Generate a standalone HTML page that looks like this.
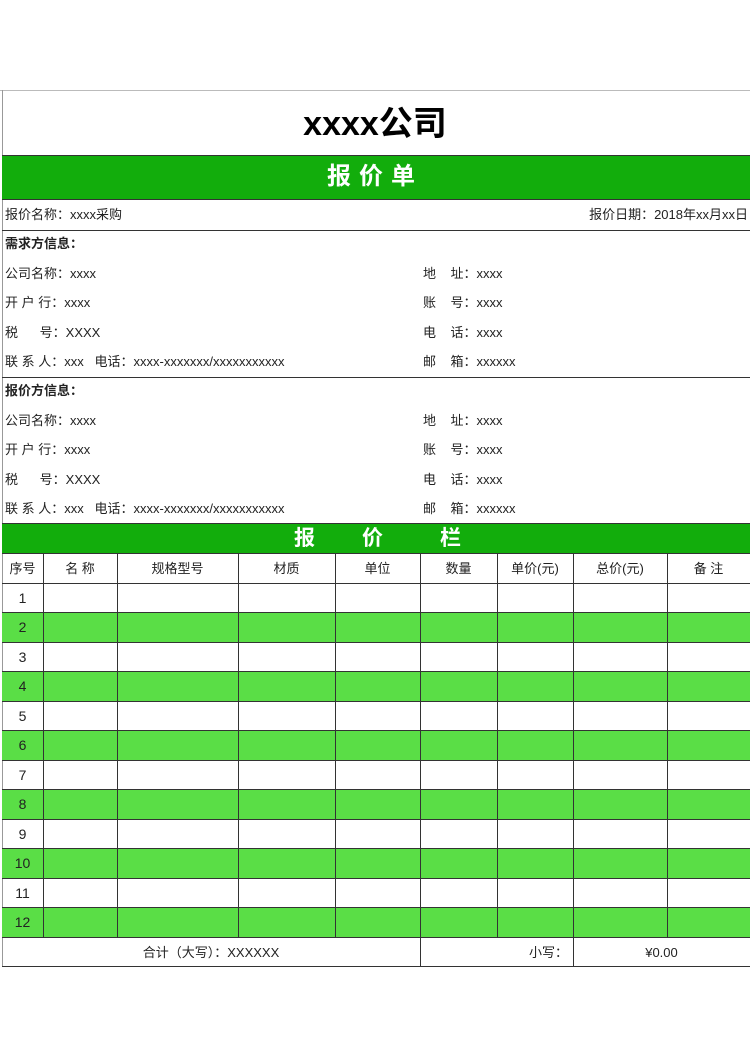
<!DOCTYPE html>
<html><head><meta charset="utf-8"><style>
*{margin:0;padding:0;box-sizing:border-box}
body{width:750px;height:1058px;background:#fff;position:relative;overflow:hidden;font-family:"Liberation Sans","Noto Sans CJK SC",sans-serif;font-size:13px;color:#222}
.a{position:absolute}
.t{position:absolute;white-space:pre;line-height:16px}
.hl{position:absolute;left:2px;right:0;height:1px;background:#333}
.vl{position:absolute;width:1px;background:#333}
.c{position:absolute;text-align:center;line-height:29px;height:29px}
</style></head><body>
<div class="a" style="left:0;top:90px;width:750px;height:1px;background:#bbb"></div>
<div class="a" style="left:2px;top:90px;width:1px;height:877px;background:#999"></div>
<div class="t" style="left:0;width:750px;text-align:center;top:106px;line-height:36px;font-size:34px;font-weight:bold;color:#000">xxxx公司</div>
<div class="a" style="left:2px;top:155px;width:748px;height:45px;background:#12ad0c;border-top:1px solid #333;border-bottom:1px solid #333"></div>
<div class="t" style="left:0;width:750px;text-align:center;top:164px;line-height:26px;font-size:24px;font-weight:bold;color:#fff;letter-spacing:8px">报价单</div>
<div class="t" style="left:5px;top:207px">报价名称：xxxx采购</div>
<div class="t" style="right:2px;top:207px">报价日期：2018年xx月xx日</div>
<div class="hl" style="top:230px"></div>
<div class="t" style="left:5px;top:236px;font-weight:bold">需求方信息：</div>
<div class="t" style="left:5px;top:266px">公司名称：xxxx</div>
<div class="t" style="left:5px;top:295px">开 户 行：xxxx</div>
<div class="t" style="left:5px;top:325px">税&nbsp;&nbsp;&nbsp;&nbsp;&nbsp;&nbsp;号：XXXX</div>
<div class="t" style="left:5px;top:354px">联 系 人：xxx&nbsp;&nbsp;&nbsp;电话：xxxx-xxxxxxx/xxxxxxxxxxx</div>
<div class="t" style="left:423px;top:266px">地&nbsp;&nbsp;&nbsp;&nbsp;址：xxxx</div>
<div class="t" style="left:423px;top:295px">账&nbsp;&nbsp;&nbsp;&nbsp;号：xxxx</div>
<div class="t" style="left:423px;top:325px">电&nbsp;&nbsp;&nbsp;&nbsp;话：xxxx</div>
<div class="t" style="left:423px;top:354px">邮&nbsp;&nbsp;&nbsp;&nbsp;箱：xxxxxx</div>
<div class="hl" style="top:377px"></div>
<div class="t" style="left:5px;top:383px;font-weight:bold">报价方信息：</div>
<div class="t" style="left:5px;top:413px">公司名称：xxxx</div>
<div class="t" style="left:5px;top:442px">开 户 行：xxxx</div>
<div class="t" style="left:5px;top:472px">税&nbsp;&nbsp;&nbsp;&nbsp;&nbsp;&nbsp;号：XXXX</div>
<div class="t" style="left:5px;top:501px">联 系 人：xxx&nbsp;&nbsp;&nbsp;电话：xxxx-xxxxxxx/xxxxxxxxxxx</div>
<div class="t" style="left:423px;top:413px">地&nbsp;&nbsp;&nbsp;&nbsp;址：xxxx</div>
<div class="t" style="left:423px;top:442px">账&nbsp;&nbsp;&nbsp;&nbsp;号：xxxx</div>
<div class="t" style="left:423px;top:472px">电&nbsp;&nbsp;&nbsp;&nbsp;话：xxxx</div>
<div class="t" style="left:423px;top:501px">邮&nbsp;&nbsp;&nbsp;&nbsp;箱：xxxxxx</div>
<div class="a" style="left:2px;top:523px;width:748px;height:31px;background:#12ad0c;border-top:1px solid #333;border-bottom:1px solid #333"></div>
<div class="t" style="left:294px;top:528px;line-height:22px;font-size:21px;font-weight:bold;color:#fff">报</div>
<div class="t" style="left:362px;top:528px;line-height:22px;font-size:21px;font-weight:bold;color:#fff">价</div>
<div class="t" style="left:440px;top:528px;line-height:22px;font-size:21px;font-weight:bold;color:#fff">栏</div>
<div id="tbl"></div>
<script>
(function(){
var xs=[2,43,117,238,335,420,497,573,667,750];
var h=['序号','名 称','规格型号','材质','单位','数量','单价(元)','总价(元)','备 注'];
var s='',t0=554,rh=29.5;
for(var r=0;r<13;r++){
 var y=t0+r*rh;
 if(r>0&&r%2==0)s+='<div class="a" style="left:2px;width:748px;top:'+y+'px;height:'+rh+'px;background:#5ade46"></div>';
 s+='<div class="hl" style="top:'+Math.round(y+rh-1)+'px"></div>';
 if(r==0){for(var i=0;i<9;i++)s+='<div class="c" style="left:'+xs[i]+'px;width:'+(xs[i+1]-xs[i])+'px;top:'+y+'px">'+h[i]+'</div>';}
 else s+='<div class="c" style="left:2px;width:41px;top:'+y+'px;font-size:14px">'+r+'</div>';
}
var bot=t0+13*rh;
for(var i=1;i<9;i++)s+='<div class="vl" style="left:'+xs[i]+'px;top:'+t0+'px;height:'+(bot-t0)+'px"></div>';
s+='<div class="vl" style="left:420px;top:'+bot+'px;height:29px"></div><div class="vl" style="left:573px;top:'+bot+'px;height:29px"></div>';
s+='<div class="hl" style="top:'+Math.round(bot+28.5)+'px"></div>';
s+='<div class="c" style="left:2px;width:418px;top:'+bot+'px">合计（大写）：XXXXXX</div>';
s+='<div class="c" style="left:420px;width:148px;top:'+bot+'px;text-align:right">小写：</div>';
s+='<div class="c" style="left:573px;width:177px;top:'+bot+'px">¥0.00</div>';
document.getElementById('tbl').innerHTML=s;
})();
</script>
</body></html>
